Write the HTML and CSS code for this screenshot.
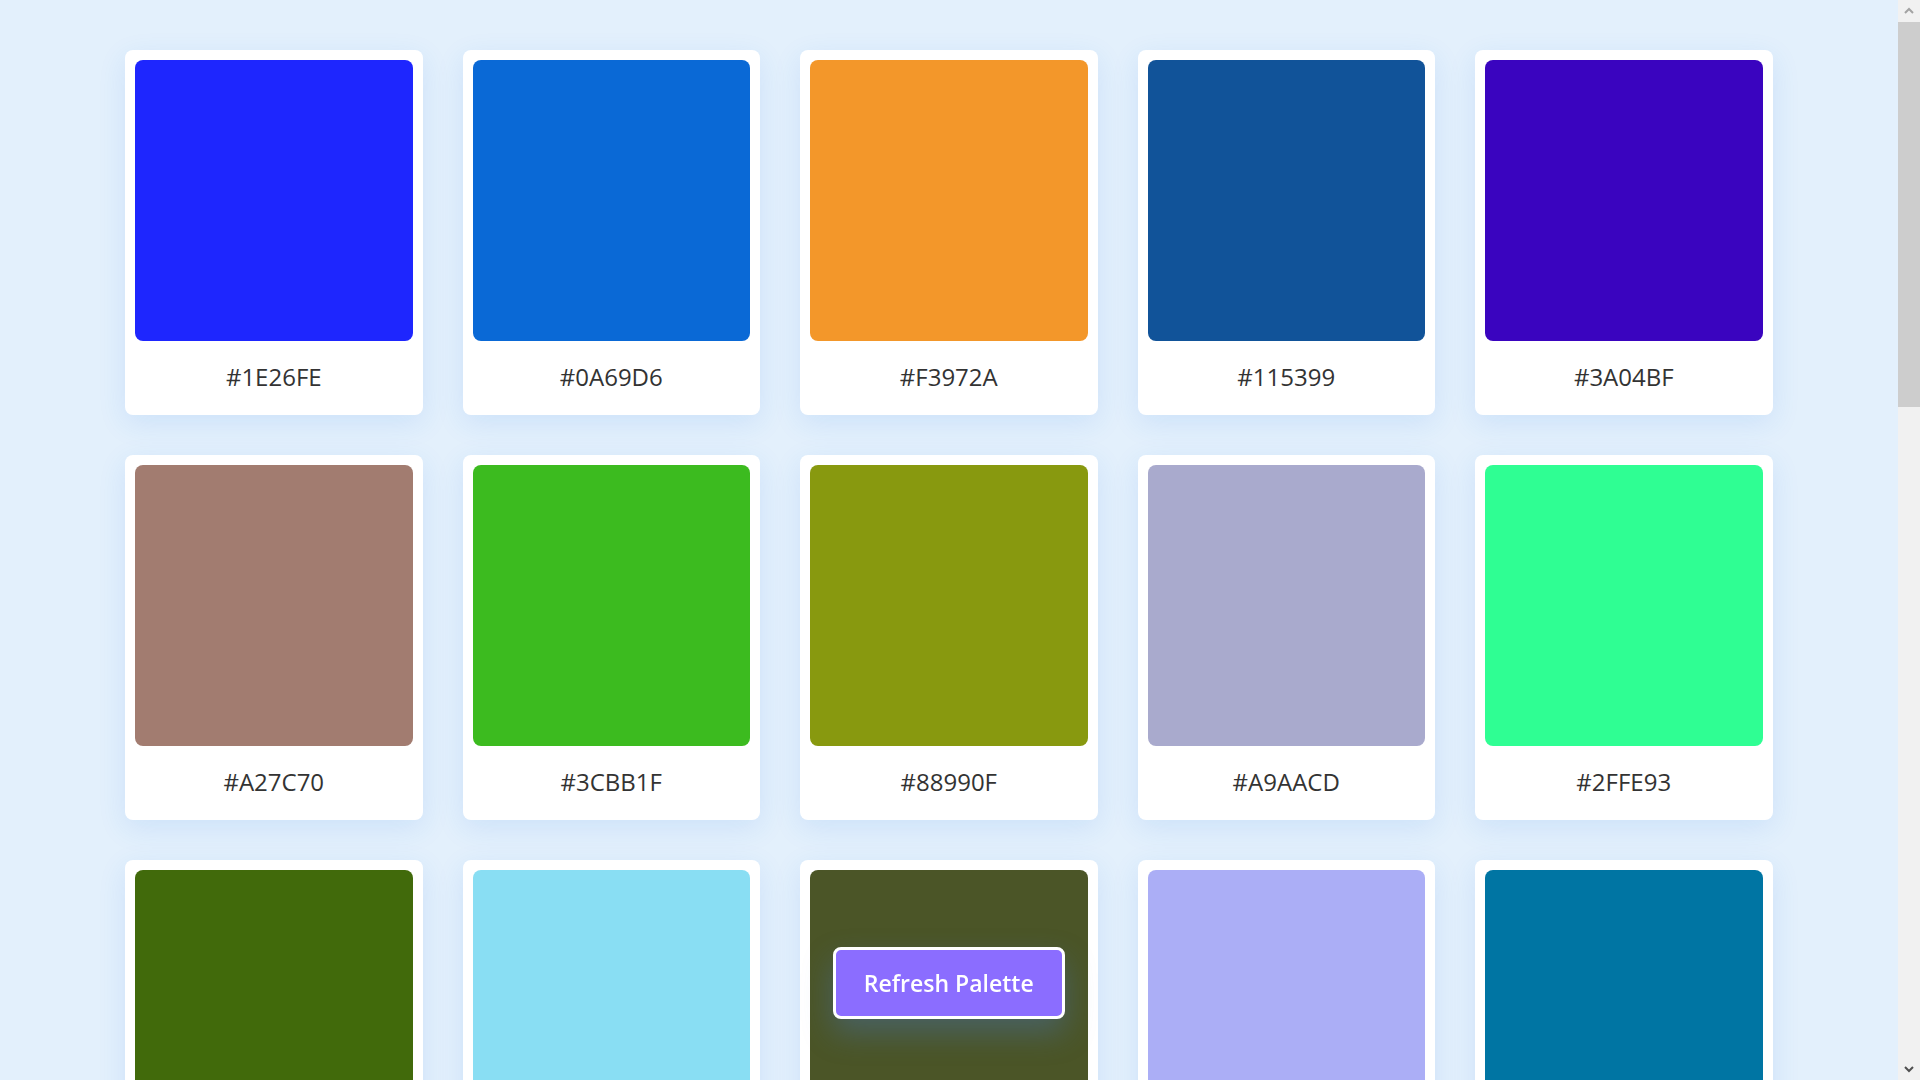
FILE: index.html
```html
<!DOCTYPE html>
<html lang="en">
<head>
<meta charset="utf-8">
<title>Palette</title>
<link rel="stylesheet" href="styles.css">
</head>
<body>
<main class="palette">
  <div class="card"><div class="swatch" style="background:#1E26FE"></div><p class="hex">#1E26FE</p></div>
  <div class="card"><div class="swatch" style="background:#0A69D6"></div><p class="hex">#0A69D6</p></div>
  <div class="card"><div class="swatch" style="background:#F3972A"></div><p class="hex">#F3972A</p></div>
  <div class="card"><div class="swatch" style="background:#115399"></div><p class="hex">#115399</p></div>
  <div class="card"><div class="swatch" style="background:#3A04BF"></div><p class="hex">#3A04BF</p></div>
  <div class="card"><div class="swatch" style="background:#A27C70"></div><p class="hex">#A27C70</p></div>
  <div class="card"><div class="swatch" style="background:#3CBB1F"></div><p class="hex">#3CBB1F</p></div>
  <div class="card"><div class="swatch" style="background:#88990F"></div><p class="hex">#88990F</p></div>
  <div class="card"><div class="swatch" style="background:#A9AACD"></div><p class="hex">#A9AACD</p></div>
  <div class="card"><div class="swatch" style="background:#2FFE93"></div><p class="hex">#2FFE93</p></div>
  <div class="card"><div class="swatch" style="background:#416A0B"></div><p class="hex">#416A0B</p></div>
  <div class="card"><div class="swatch" style="background:#89DEF3"></div><p class="hex">#89DEF3</p></div>
  <div class="card"><div class="swatch" style="background:#4B5527"></div><p class="hex">#4B5527</p></div>
  <div class="card"><div class="swatch" style="background:#ABAEF6"></div><p class="hex">#ABAEF6</p></div>
  <div class="card"><div class="swatch" style="background:#0075A3"></div><p class="hex">#0075A3</p></div>
  <div class="card"><div class="swatch" style="background:#C2185B"></div><p class="hex">#C2185B</p></div>
  <div class="card"><div class="swatch" style="background:#5E8D7A"></div><p class="hex">#5E8D7A</p></div>
  <div class="card"><div class="swatch" style="background:#E0C341"></div><p class="hex">#E0C341</p></div>
  <div class="card"><div class="swatch" style="background:#7A3E9D"></div><p class="hex">#7A3E9D</p></div>
  <div class="card"><div class="swatch" style="background:#1C9AB0"></div><p class="hex">#1C9AB0</p></div>
  <div class="card"><div class="swatch" style="background:#D46A4F"></div><p class="hex">#D46A4F</p></div>
  <div class="card"><div class="swatch" style="background:#2B3F8C"></div><p class="hex">#2B3F8C</p></div>
  <div class="card"><div class="swatch" style="background:#9BD14C"></div><p class="hex">#9BD14C</p></div>
  <div class="card"><div class="swatch" style="background:#F07BB8"></div><p class="hex">#F07BB8</p></div>
  <div class="card"><div class="swatch" style="background:#3D3D3D"></div><p class="hex">#3D3D3D</p></div>
  <div class="card"><div class="swatch" style="background:#6FC3E8"></div><p class="hex">#6FC3E8</p></div>
  <div class="card"><div class="swatch" style="background:#B5651D"></div><p class="hex">#B5651D</p></div>
  <div class="card"><div class="swatch" style="background:#4CAF82"></div><p class="hex">#4CAF82</p></div>
  <div class="card"><div class="swatch" style="background:#8E24AA"></div><p class="hex">#8E24AA</p></div>
  <div class="card"><div class="swatch" style="background:#FFD166"></div><p class="hex">#FFD166</p></div>
  <div class="card"><div class="swatch" style="background:#264653"></div><p class="hex">#264653</p></div>
  <div class="card"><div class="swatch" style="background:#E76F51"></div><p class="hex">#E76F51</p></div>
  <div class="card"><div class="swatch" style="background:#A8DADC"></div><p class="hex">#A8DADC</p></div>
  <div class="card"><div class="swatch" style="background:#6A4C93"></div><p class="hex">#6A4C93</p></div>
  <div class="card"><div class="swatch" style="background:#52B788"></div><p class="hex">#52B788</p></div>
</main>
<button class="refresh" type="button">Refresh Palette</button>
<div class="scrollbar" aria-hidden="true">
  <svg class="arrow" width="22" height="22" viewBox="0 0 22 22"><path d="M7 13 L11 9 L15 13" fill="none" stroke="#a3a3a3" stroke-width="2"/></svg>
  <div class="track"><div class="thumb"></div></div>
  <svg class="arrow" width="22" height="22" viewBox="0 0 22 22"><path d="M7 9 L11 13 L15 9" fill="none" stroke="#505050" stroke-width="2"/></svg>
</div>
</body>
</html>
```
FILE: styles.css
```css
html, body {
  margin: 0;
  padding: 0;
}

body {
  background: #e3f0fc;
  font-family: "Open Sans", "Noto Sans", sans-serif;
  color: #333333;
}

.palette {
  display: grid;
  grid-template-columns: repeat(5, 297.5px);
  column-gap: 40px;
  row-gap: 40px;
  padding: 50px 0 81px 125px;
}

.card {
  background: #ffffff;
  border-radius: 8px;
  padding: 10px;
  box-shadow: 0 8px 28px rgba(40, 120, 230, 0.12);
}

.swatch {
  height: 281px;
  border-radius: 8px;
}

.hex {
  margin: 0;
  padding: 18px 0 10px;
  font-size: 24px;
  line-height: 36px;
  text-align: center;
  color: #333333;
}

.refresh {
  position: fixed;
  left: 832.5px;
  bottom: 61px;
  width: 232.5px;
  height: 72.5px;
  box-sizing: border-box;
  border: 3px solid #ffffff;
  border-radius: 8px;
  background: #8b6dff;
  color: #ffffff;
  font-family: "Open Sans", "Noto Sans", sans-serif;
  font-size: 23px;
  font-weight: 600;
  padding: 0;
  cursor: pointer;
  box-shadow: 0 14px 30px rgba(70, 120, 210, 0.35);
}

.scrollbar {
  position: fixed;
  top: 0;
  right: 0;
  width: 22px;
  height: 100vh;
  background: #f1f1f1;
  display: flex;
  flex-direction: column;
}

.arrow {
  display: block;
  flex: 0 0 22px;
}

.track {
  flex: 1;
}

.thumb {
  height: 385px;
  background: #cdcdcd;
}
```
